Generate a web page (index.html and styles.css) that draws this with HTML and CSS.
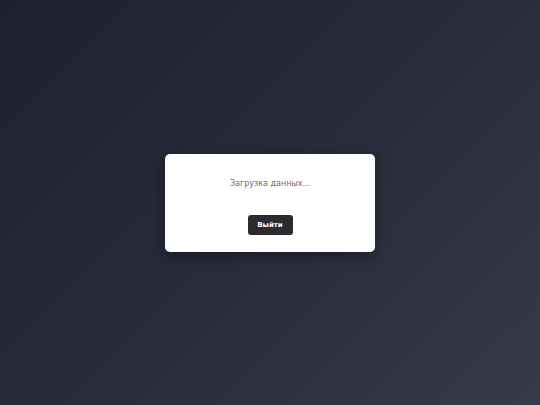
FILE: index.html
```html
<!DOCTYPE html>
<html lang="ru">
<head>
<meta charset="utf-8">
<title>Загрузка</title>
<link rel="stylesheet" href="styles.css">
</head>
<body>
<main class="screen">
  <section class="card">
    <p class="status">Загрузка данных...</p>
    <button class="logout" type="button">Выйти</button>
  </section>
</main>
</body>
</html>
```

FILE: styles.css
```css
html, body {
  margin: 0;
  padding: 0;
  height: 100%;
}
body {
  font-family: "DejaVu Sans", Verdana, sans-serif;
  background: linear-gradient(135deg, #1d2130 0%, #272b3a 50%, #363a49 100%);
}
.screen {
  height: 100%;
  display: flex;
  align-items: center;
  justify-content: center;
}
.card {
  width: 210px;
  height: 98px;
  box-sizing: border-box;
  background: #ffffff;
  border-radius: 5px;
  box-shadow: 0 4px 14px rgba(0, 0, 0, 0.35);
  display: flex;
  flex-direction: column;
  align-items: center;
  padding-top: 25px;
}
.status {
  margin: 0;
  font-size: 8px;
  line-height: 10px;
  color: #6b6b6b;
}
.logout {
  margin-top: 26px;
  width: 45px;
  height: 20px;
  padding: 0;
  border: none;
  border-radius: 3px;
  background: #2b2b2f;
  color: #ffffff;
  font-family: "DejaVu Sans", Verdana, sans-serif;
  font-weight: bold;
  font-size: 7px;
}
```
